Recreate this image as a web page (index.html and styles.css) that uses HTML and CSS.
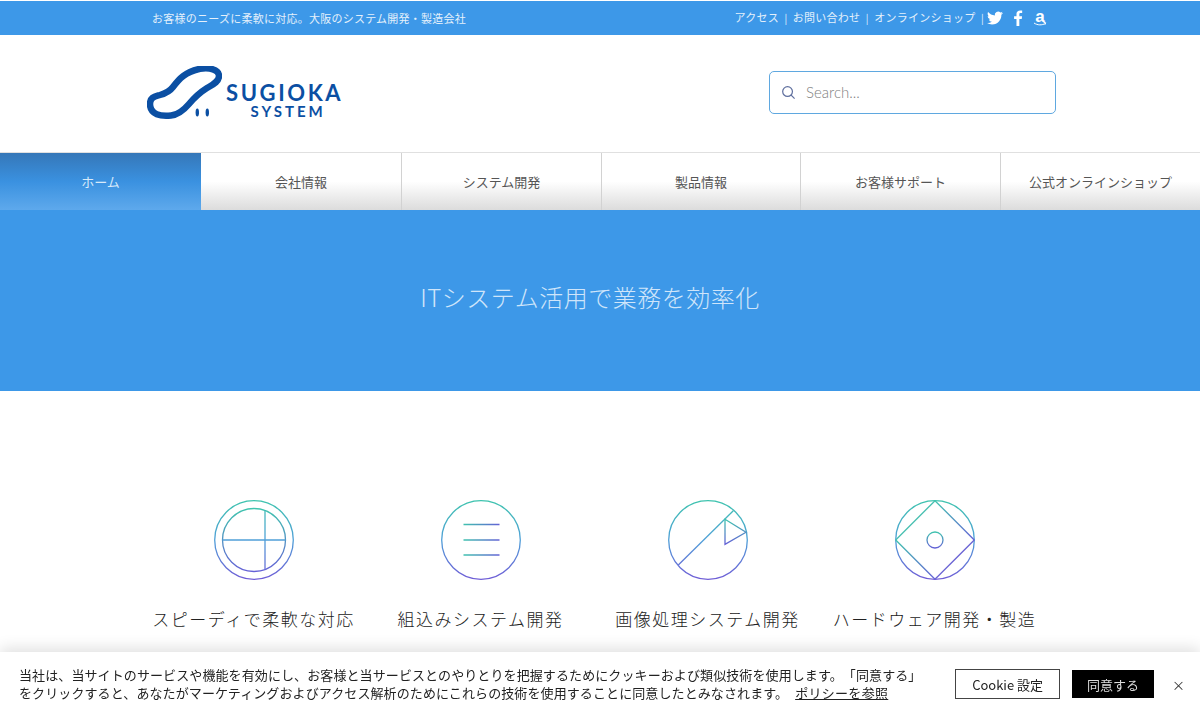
FILE: index.html
```html
<!DOCTYPE html>
<html lang="ja">
<head>
    <meta charset="UTF-8">
    <meta name="viewport" content="width=device-width, initial-scale=1.0">
    <title>SUGIOKA SYSTEM</title>
    <link rel="stylesheet" href="styles.css">
</head>
<body>

<div class="topbar">
    <p class="tagline">お客様のニーズに柔軟に対応。大阪のシステム開発・製造会社</p>
    <div class="toplinks">
        <a href="#">アクセス</a><span class="sep">|</span>
        <a href="#">お問い合わせ</a><span class="sep">|</span>
        <a href="#">オンラインショップ</a><span class="sep last">|</span>
        <svg class="social tw" viewBox="0 0 24 24"><path d="M23.95 4.57a10 10 0 0 1-2.83.78 4.96 4.96 0 0 0 2.16-2.72c-.95.55-2 .96-3.13 1.19a4.92 4.92 0 0 0-8.38 4.48C7.69 8.1 4.07 6.13 1.64 3.16a4.82 4.82 0 0 0-.66 2.47c0 1.71.87 3.21 2.19 4.1a4.9 4.9 0 0 1-2.23-.62v.06a4.92 4.92 0 0 0 3.95 4.83 5 5 0 0 1-2.21.08 4.94 4.94 0 0 0 4.6 3.42A9.87 9.87 0 0 1 0 19.54a13.94 13.94 0 0 0 7.55 2.21c9.05 0 14-7.5 14-13.98 0-.21 0-.42-.02-.63A9.94 9.94 0 0 0 24 4.59z"/></svg>
        <svg class="social fb" viewBox="0 0 10 18"><path d="M6.5 18V10h2.7l.4-3.1H6.5V5c0-.9.3-1.5 1.6-1.5h1.6V.7C9.4.7 8.5.6 7.4.6 5 .6 3.3 2.1 3.3 4.7v2.2H.6V10h2.7v8z"/></svg>
        <span class="az">a
            <svg class="az-smile" viewBox="0 0 14 5"><path d="M1 1c3.5 2.4 8 2.4 11.5.4M10.500.3l2.200.4-.7 2"/></svg>
        </span>
    </div>
</div>

<header class="site-header">
    <a class="logo" href="#">
        <svg class="logo-mark" viewBox="0 0 75 54">
            <path class="blob" d="M3 38C3 31 8 30.5 13 29C20 27 23 25 26 21C32 13 38 6 53 2.8C62 1.5 72 3 72 10C72 16 65 19 60 22C52 27 47 32 42 38C36 45 31 49 24 49.5C14 50.5 3 49 3 38Z"/>
            <ellipse cx="50.3" cy="46.5" rx="1.7" ry="4"/>
            <ellipse cx="60.3" cy="46.5" rx="1.7" ry="4"/>
        </svg>
        <span class="logo-text">
            <span class="logo-main">SUGIOKA</span>
            <span class="logo-sub">SYSTEM</span>
        </span>
    </a>
    <div class="search">
        <svg class="search-icon" viewBox="0 0 16 16"><circle cx="7" cy="7" r="5.2"/><line x1="10.8" y1="10.8" x2="14.5" y2="14.5"/></svg>
        <span class="search-text">Search...</span>
    </div>
</header>

<nav class="main-nav">
    <a class="active" href="#">ホーム</a>
    <a href="#">会社情報</a>
    <a href="#">システム開発</a>
    <a href="#">製品情報</a>
    <a href="#">お客様サポート</a>
    <a href="#">公式オンラインショップ</a>
</nav>

<section class="hero">
    <h1>ITシステム活用で業務を効率化</h1>
</section>

<section class="services">
    <div class="service">
        <svg class="service-icon" viewBox="0 0 80 80">
            <defs>
                <linearGradient id="lineGrad" gradientUnits="userSpaceOnUse" x1="0" y1="0" x2="0" y2="80">
                    <stop offset="0" stop-color="#3fc4ae"/>
                    <stop offset="0.5" stop-color="#4f9fd8"/>
                    <stop offset="1" stop-color="#6f5bd6"/>
                </linearGradient>
                <linearGradient id="boxGrad" x1="0" y1="0" x2="0" y2="1">
                    <stop offset="0" stop-color="#3fc4ae"/>
                    <stop offset="1" stop-color="#6460d6"/>
                </linearGradient>
                <linearGradient id="rowGrad" gradientUnits="userSpaceOnUse" x1="22" y1="0" x2="59" y2="0">
                    <stop offset="0" stop-color="#3fc4ae"/>
                    <stop offset="1" stop-color="#6460d6"/>
                </linearGradient>
            </defs>
            <circle cx="40" cy="40" r="39.3"/>
            <circle class="box" cx="40" cy="40" r="31.5"/>
            <line x1="8.5" y1="40" x2="71.5" y2="40"/>
            <line x1="51" y1="10" x2="51" y2="69.5"/>
        </svg>
        <h2>スピーディで柔軟な対応</h2>
    </div>
    <div class="service">
        <svg class="service-icon" viewBox="0 0 80 80">
            <circle cx="40" cy="40" r="39.3"/>
            <line class="row" x1="22.5" y1="24.5" x2="58.5" y2="24.5"/>
            <line class="row" x1="22.5" y1="40" x2="58.5" y2="40"/>
            <line class="row" x1="22.5" y1="55" x2="58.5" y2="55"/>
        </svg>
        <h2>組込みシステム開発</h2>
    </div>
    <div class="service">
        <svg class="service-icon" viewBox="0 0 80 80">
            <circle cx="40" cy="40" r="39.3"/>
            <line x1="10.3" y1="65" x2="65.3" y2="10.7"/>
            <polygon class="box" points="57,19.3 78,32.3 57,44.3"/>
        </svg>
        <h2>画像処理システム開発</h2>
    </div>
    <div class="service">
        <svg class="service-icon" viewBox="0 0 80 80">
            <circle cx="40" cy="40" r="39.3"/>
            <line class="edge-teal" x1=".7" y1="40" x2="40" y2=".7"/>
            <line class="box" x1="40" y1=".7" x2="79.3" y2="40"/>
            <line class="box" x1=".7" y1="40" x2="40" y2="79.3"/>
            <line class="edge-violet" x1="79.3" y1="40" x2="40" y2="79.3"/>
            <circle class="box" cx="40" cy="40" r="8"/>
        </svg>
        <h2>ハードウェア開発・製造</h2>
    </div>
</section>

<div class="cookie-bar">
    <p class="cookie-text">当社は、当サイトのサービスや機能を有効にし、お客様と当サービスとのやりとりを把握するためにクッキーおよび類似技術を使用します。「同意する」<br>をクリックすると、あなたがマーケティングおよびアクセス解析のためにこれらの技術を使用することに同意したとみなされます。 <a href="#">ポリシーを参照</a></p>
    <button class="btn-outline">Cookie 設定</button>
    <button class="btn-black">同意する</button>
    <span class="cookie-close">×</span>
</div>

</body>
</html>
```

FILE: styles.css
```css
html, body {
    height: 100%;
}
body {
    margin: 0;
    overflow: hidden;
    background: #fff;
    font-family: "Noto Sans CJK JP", "Noto Sans", sans-serif;
    color: #555;
}
a {
    color: inherit;
    text-decoration: none;
}

/* top bar */
.topbar {
    display: flex;
    justify-content: space-between;
    align-items: center;
    height: 34px;
    margin-top: 1px;
    padding: 0 153px 0 152px;
    background: #3d98e8;
    color: #e4f0fb;
    font-size: 11px;
}
.tagline {
    margin: 0 0 1px;
    letter-spacing: 0.25px;
}
.toplinks {
    display: flex;
    align-items: center;
    letter-spacing: 0.25px;
}
.toplinks a {
    margin-bottom: 2px;
}
.sep {
    margin: 0 5.5px 2px;
    font-size: 10px;
}
.sep.last {
    margin-right: 3px;
}
.social {
    fill: #fff;
}
.tw {
    width: 16px;
    height: 16px;
}
.fb {
    width: 10px;
    height: 16px;
    margin-left: 10px;
}
.az {
    position: relative;
    width: 14px;
    height: 18px;
    margin-left: 10px;
    font-family: "Liberation Sans", sans-serif;
    font-size: 17px;
    font-weight: 700;
    line-height: 16px;
    text-align: center;
    color: #fff;
}
.az-smile {
    position: absolute;
    left: 0;
    bottom: 0;
    width: 14px;
    height: 5px;
    fill: none;
    stroke: #fff;
    stroke-width: 1;
}

/* logo + search */
.site-header {
    display: flex;
    justify-content: space-between;
    align-items: center;
    height: 117px;
    padding: 0 144px 2px 147px;
    box-sizing: border-box;
}
.logo {
    display: flex;
    align-items: center;
    color: #0b4fa3;
}
.logo-mark {
    width: 75px;
    height: 54px;
    fill: #0b4fa3;
}
.blob {
    fill: none;
    stroke: #0b4fa3;
    stroke-width: 6.5;
}
.logo-text {
    display: flex;
    flex-direction: column;
    align-items: center;
    margin: 16px 0 0 4px;
    font-family: Lato, sans-serif;
    font-weight: 700;
}
.logo-main {
    font-size: 22px;
    line-height: 22px;
    letter-spacing: 2.6px;
}
.logo-sub {
    font-size: 15px;
    line-height: 15px;
    letter-spacing: 3px;
    margin-left: 7px;
}
.search {
    display: flex;
    align-items: center;
    box-sizing: border-box;
    width: 287px;
    height: 43px;
    padding-left: 11px;
    border: 1px solid #5fa8e0;
    border-radius: 5px;
}
.search-icon {
    width: 15px;
    height: 15px;
    fill: none;
    stroke: #5f6f9e;
    stroke-width: 1.3;
}
.search-text {
    margin: 0 0 2px 10px;
    font-family: Lato, sans-serif;
    font-size: 15px;
    font-weight: 300;
    color: #808080;
}

/* main nav */
.main-nav {
    display: grid;
    grid-template-columns: 201px 201px 200px 199px 200px 199px;
    box-sizing: border-box;
    height: 58px;
    border-top: 1px solid #e0e0e0;
}
.main-nav a {
    display: flex;
    align-items: center;
    justify-content: center;
    border-right: 1px solid #d2d2d2;
    background: linear-gradient(#fff 0%, #fff 50%, #dcdcdc 100%);
    font-size: 13px;
}
.main-nav a:last-child {
    border-right: 0;
}
.main-nav a.active {
    border-right: 0;
    background: linear-gradient(#3577b8 0%, #3a91e0 50%, #5ea9ec 100%);
    color: #d8eafa;
}

/* hero */
.hero {
    display: flex;
    align-items: center;
    justify-content: center;
    box-sizing: border-box;
    height: 181px;
    padding-bottom: 8px;
    background: #3d98e8;
}
.hero h1 {
    margin: 0 20px 0 0;
    font-size: 24px;
    font-weight: 300;
    letter-spacing: 0.5px;
    color: #cfe5fa;
}

/* services */
.services {
    display: grid;
    grid-template-columns: repeat(4, 227px);
    padding: 109px 0 0 140px;
}
.service {
    display: flex;
    flex-direction: column;
    align-items: center;
}
.service-icon {
    width: 80px;
    height: 80px;
    fill: none;
    stroke: url(#lineGrad);
    stroke-width: 1.3;
}
.service-icon .box {
    stroke: url(#boxGrad);
}
.service-icon .row {
    stroke: url(#rowGrad);
}
.service-icon .edge-teal {
    stroke: #45bfb0;
}
.service-icon .edge-violet {
    stroke: #6a63d4;
}
.service h2 {
    margin: 26px 0 0;
    font-size: 17px;
    font-weight: 300;
    line-height: 26px;
    letter-spacing: 1.5px;
    white-space: nowrap;
    color: #222;
}

/* cookie notice */
.cookie-bar {
    position: fixed;
    left: 0;
    right: 0;
    bottom: 0;
    display: flex;
    align-items: center;
    height: 66px;
    padding: 0 15px 2px 19px;
    box-sizing: border-box;
    background: #fff;
    box-shadow: 0 -4px 14px rgba(0, 0, 0, 0.12);
    color: #222;
}
.cookie-text {
    width: 906px;
    margin: 0 30px 0 0;
    font-size: 13px;
    line-height: 18px;
    letter-spacing: 0.1px;
    white-space: nowrap;
    text-spacing-trim: space-all;
}
.cookie-text a {
    margin-left: 4px;
    letter-spacing: 0.3px;
    text-decoration: underline;
}
.btn-outline, .btn-black {
    font-family: inherit;
    font-size: 13px;
    padding: 0;
}
.btn-outline {
    width: 105px;
    height: 30px;
    margin: 0 12px 0 1px;
    border: 1px solid #444;
    background: #fff;
    color: #222;
}
.btn-black {
    width: 82px;
    height: 28px;
    border: 0;
    background: #000;
    color: #ddd;
}
.cookie-close {
    margin-left: 18px;
    font-size: 13px;
    color: #333;
}
```
